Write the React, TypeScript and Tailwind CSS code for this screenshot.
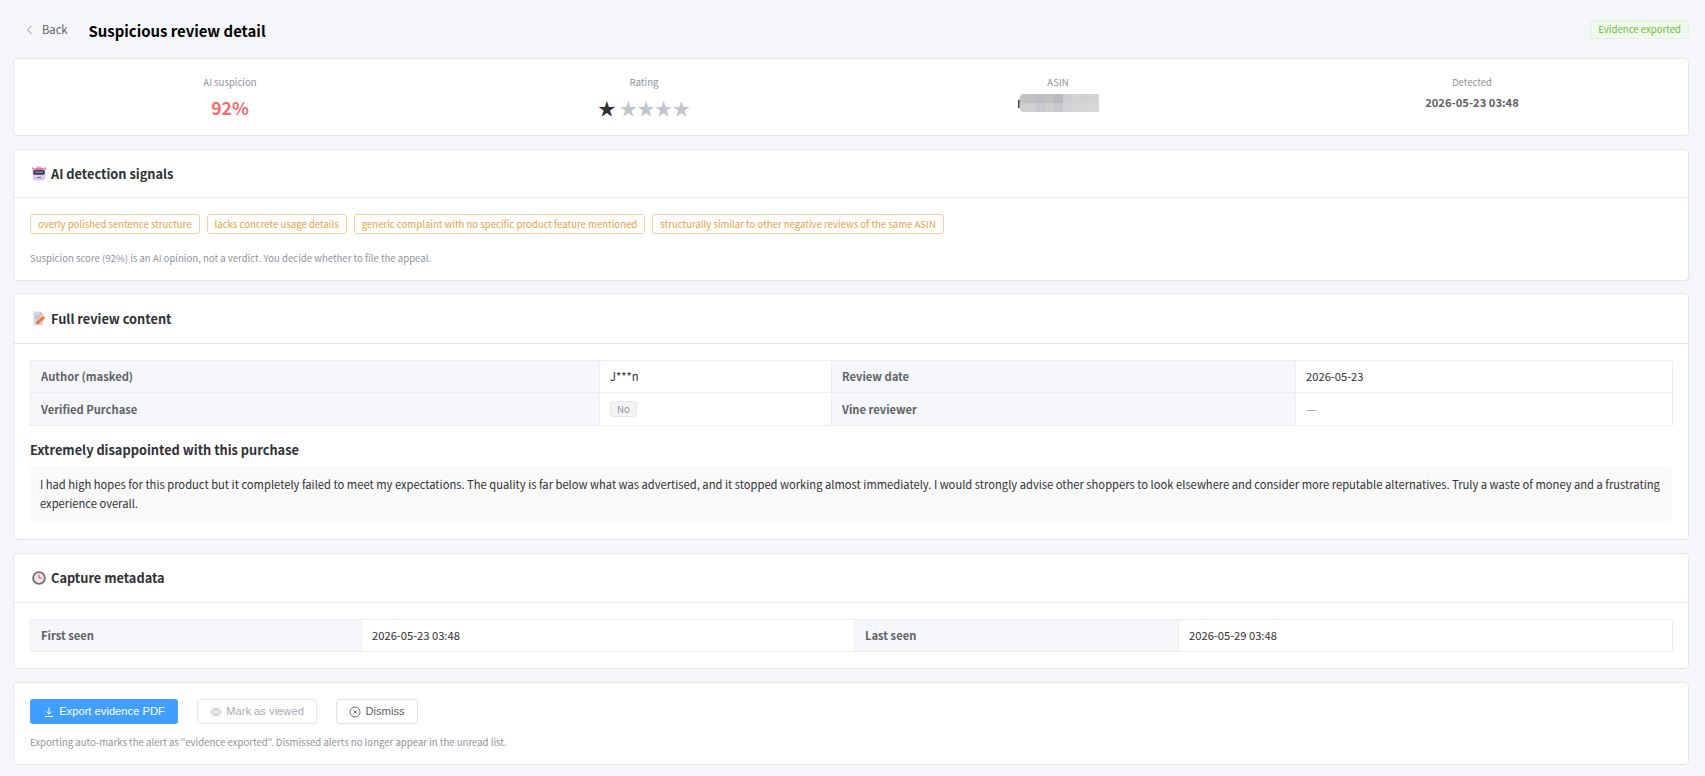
import React from "react";

const mosaic = [
  ["#c4c2c4", "#c2c0c3", "#bebcc0", "#c1c0c3", "#bab8bc", "#cfcdd0", "#d2d1d3", "#d0cfd1", "#d4d3d4"],
  ["#d0cfcf", "#d1d0d1", "#c9c8cc", "#cfcecb", "#c9c8cc", "#d4d3d5", "#d5d4d6", "#d8d7d8", "#d8d8d8"],
];

function RobotIcon() {
  return (
    <svg width="14" height="15" viewBox="0 0 14 15" className="shrink-0">
      <path d="M0.5 1 L3.5 3 L0.5 5 Z" fill="#e0567a" />
      <path d="M13.5 1 L10.5 3 L13.5 5 Z" fill="#e0567a" />
      <rect x="4" y="0.5" width="6" height="1.6" rx="0.8" fill="#f3a9c4" />
      <rect x="0.8" y="2" width="12.4" height="12.5" rx="3.2" fill="#d9c8ec" />
      <path d="M3 2 H11 V4 H3 Z" fill="#e9799d" />
      <rect x="1.2" y="4" width="11.6" height="4.8" rx="1.6" fill="#3a3e54" />
      <rect x="3" y="5.4" width="8" height="1.3" fill="#8f97b3" />
      <rect x="5" y="11" width="4" height="1" fill="#6b5f80" />
    </svg>
  );
}

function MemoIcon() {
  return (
    <svg width="14" height="15" viewBox="0 0 14 15" className="shrink-0">
      <path d="M1.5 0.5 H8 L11 3.5 V14.5 H1.5 Z" fill="#d9d3e0" />
      <path d="M8 0.5 L11 3.5 H8 Z" fill="#bdb6c8" />
      <path d="M3 5 H8 M3 7 H7" stroke="#b2abc0" strokeWidth="0.8" />
      <path d="M4.5 13 L5 10.2 L11 4.8 L13.2 7 L7.2 12.4 Z" fill="#ee7b3c" />
      <path d="M4.5 13 L5 10.8 L6.6 12.4 Z" fill="#7a4a33" />
    </svg>
  );
}

function ClockIcon() {
  return (
    <svg width="14" height="14" viewBox="0 0 14 14" className="shrink-0">
      <circle cx="7" cy="7" r="6.8" fill="#727077" />
      <circle cx="7" cy="7" r="4.9" fill="#f0e8ec" />
      <path d="M7 3.4 V7 H10" stroke="#c24a68" strokeWidth="1" fill="none" />
    </svg>
  );
}

function BackIcon() {
  return (
    <svg width="12" height="12" viewBox="0 0 12 12" fill="none" stroke="#8d9095" strokeWidth="1">
      <path d="M7.5 2 L3.5 6 L7.5 10" />
    </svg>
  );
}

function DownloadIcon() {
  return (
    <svg width="12" height="12" viewBox="0 0 12 12" fill="none" stroke="#ffffff" strokeWidth="1">
      <path d="M6 1.5 V8 M3.2 5.4 L6 8.2 L8.8 5.4 M1.8 10.5 H10.2" />
    </svg>
  );
}

function EyeIcon() {
  return (
    <svg width="12" height="12" viewBox="0 0 12 12" fill="none" stroke="#a8abb2" strokeWidth="0.9">
      <path d="M0.8 6 C2.2 3.4 4 2.6 6 2.6 C8 2.6 9.8 3.4 11.2 6 C9.8 8.6 8 9.4 6 9.4 C4 9.4 2.2 8.6 0.8 6 Z" />
      <circle cx="6" cy="6" r="2.2" />
    </svg>
  );
}

function CloseCircleIcon() {
  return (
    <svg width="12" height="12" viewBox="0 0 12 12" fill="none" stroke="#606266" strokeWidth="0.9">
      <circle cx="6" cy="6" r="5" />
      <path d="M4.3 4.3 L7.7 7.7 M7.7 4.3 L4.3 7.7" />
    </svg>
  );
}

function Stat({ label, children }: { label: string; children: React.ReactNode }) {
  return (
    <div className="flex flex-col items-center">
      <div className="text-[9.6px] leading-[18px] text-[#909399]">{label}</div>
      {children}
    </div>
  );
}

function SectionHeader({ icon, title, h }: { icon: React.ReactNode; title: string; h: string }) {
  return (
    <div className={`flex items-center gap-[5px] border-b border-[#e4e7ed] pl-[18px] pr-4 ${h}`}>
      {icon}
      <span className="text-[12.8px] font-bold text-[#303133]">{title}</span>
    </div>
  );
}

function Label({ children }: { children: React.ReactNode }) {
  return (
    <div className="flex items-center border-r border-b border-[#ebeef5] bg-[#f5f7fa] pl-[10px] text-[11.2px] font-bold text-[#606266]">
      {children}
    </div>
  );
}

function Value({ children }: { children: React.ReactNode }) {
  return (
    <div className="flex items-center border-r border-b border-[#ebeef5] bg-white pl-[10px] text-[11.2px] text-[#303133]">
      {children}
    </div>
  );
}

const signals = [
  "overly polished sentence structure",
  "lacks concrete usage details",
  "generic complaint with no specific product feature mentioned",
  "structurally similar to other negative reviews of the same ASIN",
];

export default function App() {
  return (
    <div className="min-h-screen bg-[#f5f7fa] pl-[13px] pr-[16px] font-['Noto_Sans_CJK_SC','Noto_Sans',sans-serif]">
      <div className="flex h-[58px] items-start justify-between">
        <div className="flex items-center pl-[11px] pt-[20px]">
          <div className="mb-[2px] flex items-center gap-[6px] text-[11.2px] leading-[19px] text-[#606266]">
            <BackIcon />
            <span>Back</span>
          </div>
          <h1 className="ml-[21px] text-[14.9px] font-bold leading-[20px] text-[#000000]">Suspicious review detail</h1>
        </div>
        <div className="mt-[20px] flex h-[19px] items-center rounded-[3px] border border-[#e1f3d8] bg-[#f0f9eb] px-[7px] text-[9.6px] text-[#67c23a]">
          Evidence exported
        </div>
      </div>

      <div className="flex flex-col gap-[13px]">
        <div className="grid h-[78px] grid-cols-4 rounded-[4px] border border-[#e4e7ed] bg-white px-[9px] pt-[14px]">
          <Stat label="AI suspicion">
            <div className="mt-[2px] text-[17.6px] leading-[30px] font-bold text-[#f56c6c]">92%</div>
          </Stat>
          <Stat label="Rating">
            <div className="mt-[2px] flex h-[30px] items-center text-[17.6px] leading-[30px]">
              <span className="mr-[4px] text-[#303133]">★</span>
              <span className="text-[#c0c4cc]">★★★★</span>
            </div>
          </Stat>
          <Stat label="ASIN">
            <div className="mt-[3px] flex items-center">
              <svg width="81" height="18" viewBox="0 0 81 18" className="block">
                {mosaic.map((row, r) =>
                  row.map((c, i) => <rect key={`${r}-${i}`} x={i * 9} y={r * 9} width="9.2" height="9.2" fill={c} />)
                )}
                <path d="M0 0 H4 Q1 2 1 9 Q1 16 4 18 H0 Z" fill="#ffffff" />
                <rect x="0" y="6" width="1.5" height="8" fill="#4a4238" />
              </svg>
            </div>
          </Stat>
          <Stat label="Detected">
            <div className="mt-[1px] text-[11.2px] leading-[20px] font-bold text-[#606266]">2026-05-23 03:48</div>
          </Stat>
        </div>

        <div className="h-[132px] rounded-[4px] border border-[#e4e7ed] bg-white">
          <SectionHeader icon={<RobotIcon />} title="AI detection signals" h="h-[48px]" />
          <div className="px-[16px] pt-[16px]">
            <div className="flex gap-[7px]">
              {signals.map((s) => (
                <span key={s} className="flex h-[20px] items-center rounded-[3px] border border-[#f3d19e] bg-white px-[7px] text-[9.6px] text-[#e6a23c]">
                  {s}
                </span>
              ))}
            </div>
            <p className="mt-[15px] text-[9.6px] leading-[18px] text-[#909399]">
              Suspicion score (92%) is an AI opinion, not a verdict. You decide whether to file the appeal.
            </p>
          </div>
        </div>

        <div className="-mt-px h-[247px] rounded-[4px] border border-[#e4e7ed] bg-white">
          <SectionHeader icon={<MemoIcon />} title="Full review content" h="h-[50px]" />
          <div className="px-[16px] pt-[16px]">
            <div className="grid grid-cols-[569px_232px_464px_377px] grid-rows-[32px_33px] border-t border-l border-[#ebeef5]">
              <Label>Author (masked)</Label>
              <Value>J***n</Value>
              <Label>Review date</Label>
              <Value>2026-05-23</Value>
              <Label>Verified Purchase</Label>
              <Value>
                <span className="flex h-[16px] items-center rounded-[3px] border border-[#e9e9eb] bg-[#f4f4f5] px-[6px] text-[9.6px] text-[#909399]">No</span>
              </Value>
              <Label>Vine reviewer</Label>
              <div className="flex items-center border-r border-b border-[#ebeef5] bg-white pl-[10px] text-[11.2px] text-[#909399]">—</div>
            </div>
            <h3 className="mt-[13px] text-[12.8px] font-bold leading-[21px] text-[#303133]">Extremely disappointed with this purchase</h3>
            <p className="mt-[6px] rounded-[4px] bg-[#fafafa] px-[10px] py-[9px] text-[11.2px] leading-[19px] text-[#303133]">
              I had high hopes for this product but it completely failed to meet my expectations. The quality is far below what was advertised, and it stopped working almost immediately. I would strongly advise other shoppers to look elsewhere and consider more reputable alternatives. Truly a waste of money and a frustrating experience overall.
            </p>
          </div>
        </div>

        <div className="h-[116px] rounded-[4px] border border-[#e4e7ed] bg-white">
          <SectionHeader icon={<ClockIcon />} title="Capture metadata" h="h-[49px]" />
          <div className="px-[16px] pt-[16px]">
            <div className="grid h-[33px] grid-cols-[331px_493px_324px_494px] border-t border-l border-[#ebeef5]">
              <Label>First seen</Label>
              <Value>2026-05-23 03:48</Value>
              <Label>Last seen</Label>
              <Value>2026-05-29 03:48</Value>
            </div>
          </div>
        </div>

        <div className="h-[83px] rounded-[4px] border border-[#e4e7ed] bg-white px-[16px] pt-[16px]">
          <div className="flex gap-[19px] font-['Liberation_Sans',Arial,sans-serif] text-[11.2px]">
            <button className="flex h-[25px] w-[148px] items-center justify-center gap-[4px] rounded-[3px] bg-[#409eff] text-white">
              <DownloadIcon />
              Export evidence PDF
            </button>
            <button className="flex h-[25px] w-[120px] items-center justify-center gap-[4px] rounded-[3px] border border-[#e4e7ed] bg-white text-[#a8abb2]">
              <EyeIcon />
              Mark as viewed
            </button>
            <button className="flex h-[25px] w-[82px] items-center justify-center gap-[4px] rounded-[3px] border border-[#dcdfe6] bg-white text-[#606266]">
              <CloseCircleIcon />
              Dismiss
            </button>
          </div>
          <p className="mt-[9px] text-[9.6px] leading-[18px] text-[#909399]">
            Exporting auto-marks the alert as "evidence exported". Dismissed alerts no longer appear in the unread list.
          </p>
        </div>
      </div>
    </div>
  );
}
